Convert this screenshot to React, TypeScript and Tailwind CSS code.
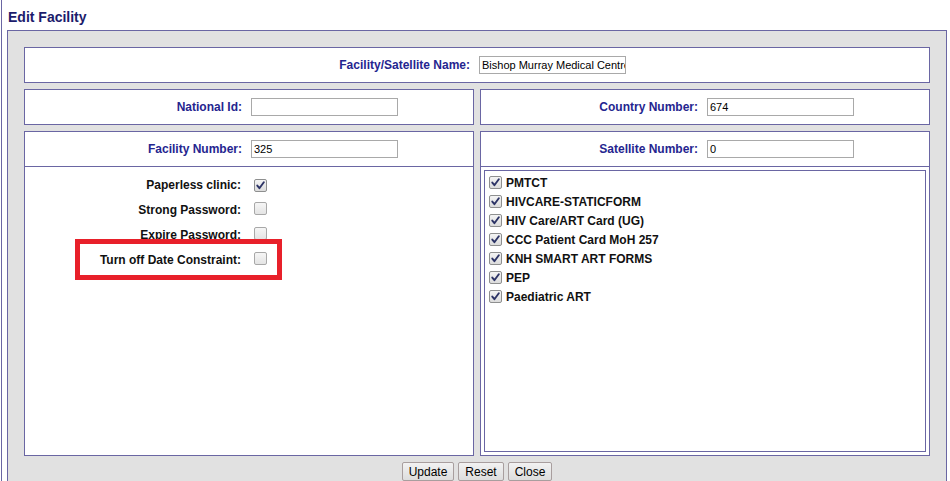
import React from "react";

const Check = ({ checked }: { checked: boolean }) => (
  <span
    className={
      "inline-flex h-[13px] w-[13px] shrink-0 items-center justify-center rounded-[2px] border " +
      (checked
        ? "border-[#8e8f8f] bg-gradient-to-b from-[#f4f4f4] to-[#dcdcdc]"
        : "border-[#a8a8a8] bg-gradient-to-b from-[#f6f6f6] to-[#e4e4e4]")
    }
  >
    {checked && (
      <svg width="9" height="9" viewBox="0 0 9 9">
        <path d="M1.3 4.6 L3.4 7.2 L7.8 1.2" fill="none" stroke="#2d3466" strokeWidth="1.9" strokeLinecap="round" strokeLinejoin="round" />
      </svg>
    )}
  </span>
);

const Field = ({ label, value, blue = true }: { label: string; value: string; blue?: boolean }) => (
  <div className="flex h-[34px] items-center">
    <div className={"flex w-1/2 justify-end pr-[7px] text-[12px] font-bold " + (blue ? "text-[#25258f]" : "text-black")}>
      {label}
    </div>
    <div className="w-1/2 pl-[2px]">
      <div className="h-[18px] w-[147px] overflow-hidden whitespace-nowrap border border-[#a9a9a9] bg-white px-[2px] text-[11px] leading-[16px] text-black">
        {value}
      </div>
    </div>
  </div>
);

const items = [
  "PMTCT",
  "HIVCARE-STATICFORM",
  "HIV Care/ART Card (UG)",
  "CCC Patient Card MoH 257",
  "KNH SMART ART FORMS",
  "PEP",
  "Paediatric ART",
];

const opts: [string, boolean][] = [
  ["Paperless clinic:", true],
  ["Strong Password:", false],
  ["Expire Password:", false],
  ["Turn off Date Constraint:", false],
];

export default function App() {
  return (
    <div className="min-h-[481px] bg-white font-['Liberation_Sans',Arial,sans-serif]">
      <div className="ml-[1px] min-h-[481px] border-l border-[#6a66a3]">
        <div className="pl-[6px] pt-[9px] text-[14px] font-bold leading-[16px] text-[#1c1c6c]">Edit Facility</div>
        <div className="ml-[5px] mt-[5px] w-[940px] border border-[#6a66a3] bg-[#e1e1e1] px-[16px] pb-[20px] pt-[16px]">
          <div className="flex flex-col gap-[6px]">
            <div className="border border-[#6a66a3] bg-white">
              <Field label="Facility/Satellite Name:" value="Bishop Murray Medical Centre" />
            </div>
            <div className="flex gap-[6px]">
              <div className="w-[450px] border border-[#6a66a3] bg-white">
                <Field label="National Id:" value="" />
              </div>
              <div className="w-[450px] border border-[#6a66a3] bg-white">
                <Field label="Country Number:" value="674" />
              </div>
            </div>
            <div className="flex gap-[6px]">
              <div className="relative flex h-[325px] w-[450px] flex-col border border-[#6a66a3] bg-white">
                <div className="border-b border-[#6a66a3]">
                  <Field label="Facility Number:" value="325" />
                </div>
                <div className="pt-[5px]">
                  {opts.map(([l, c]) => (
                    <div key={l} className="flex h-[25px] items-center">
                      <div className="flex w-1/2 justify-end pr-[8px] text-[12px] font-bold text-[#111]">{l}</div>
                      <div className="w-1/2 pl-[5px]">
                        <Check checked={c} />
                      </div>
                    </div>
                  ))}
                </div>
                <div className="absolute left-[50px] top-[107px] h-[41px] w-[207px] border-[5px] border-[#e8202a]" />
              </div>
              <div className="flex h-[325px] w-[450px] flex-col border border-[#6a66a3] bg-white">
                <div className="border-b border-[#6a66a3]">
                  <Field label="Satellite Number:" value="0" />
                </div>
                <div className="m-[3px] flex-1 border border-[#6a66a3] pt-[2px]">
                  {items.map((t) => (
                    <div key={t} className="flex h-[19px] items-center pl-[4px]">
                      <Check checked />
                      <span className="ml-[4px] text-[12px] font-bold text-[#111]">{t}</span>
                    </div>
                  ))}
                </div>
              </div>
            </div>
          </div>
          <div className="mt-[6px] flex justify-center gap-[4px]">
            {["Update", "Reset", "Close"].map((b) => (
              <button
                key={b}
                className="h-[19px] rounded-[2px] border border-[#a89e9e] bg-gradient-to-b from-[#f2f2f2] to-[#dddddd] px-[6px] text-[12px] leading-[16px] text-black"
              >
                {b}
              </button>
            ))}
          </div>
        </div>
      </div>
    </div>
  );
}
